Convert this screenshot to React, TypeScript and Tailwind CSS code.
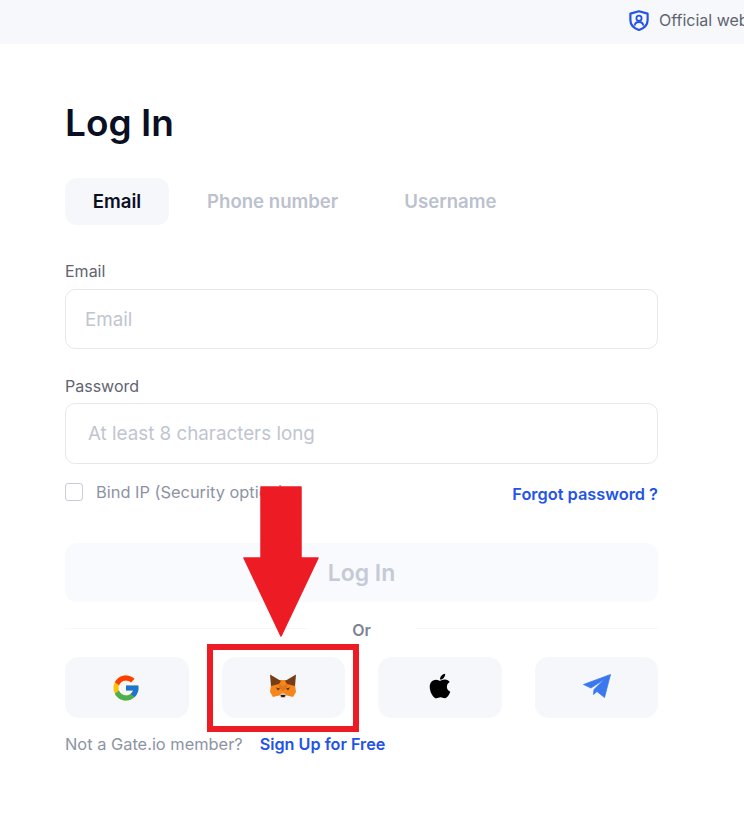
import { FcGoogle } from "react-icons/fc";
import { FaApple } from "react-icons/fa";

function Shield() {
  return (
    <svg width="20" height="21" viewBox="0 0 20 21" fill="none" className="shrink-0">
      <path d="M10 1.2 L18.6 3.6 V10.2 C18.6 14.8 15 18.2 10 20 C5 18.2 1.4 14.8 1.4 10.2 V3.6 Z" stroke="#2354e6" strokeWidth="2.2" strokeLinejoin="round" />
      <circle cx="10" cy="8.2" r="2.6" stroke="#2354e6" strokeWidth="1.8" />
      <path d="M5.6 15.6 C6 12.8 8 12 10 12 C12 12 14 12.8 14.4 15.6" stroke="#2354e6" strokeWidth="1.8" />
    </svg>
  );
}

function Fox() {
  return (
    <svg width="28" height="25" viewBox="0 0 28 25" className="mb-[2px]">
      <polygon points="2,11 10,6 18,6 26,11 27,18 24,23 18,21.5 14,21 10,21.5 4,23 1,18" fill="#f6851b" />
      <polygon points="1,0.5 12,7 10,10 2,12" fill="#763d16" />
      <polygon points="27,0.5 16,7 18,10 26,12" fill="#763d16" />
      <polygon points="10,9 14,13 18,9 18,14 14,17 10,14" fill="#e2761b" />
      <polygon points="7,13.5 11,14.5 9,16.5" fill="#5c3317" />
      <polygon points="21,13.5 17,14.5 19,16.5" fill="#5c3317" />
      <polygon points="10.5,21 14,18.5 17.5,21 16,24 12,24" fill="#d7c1b3" />
      <polygon points="11.5,21 16.5,21 15.5,23 12.5,23" fill="#2a1a10" />
    </svg>
  );
}

function Plane() {
  return (
    <svg width="28" height="24" viewBox="0 0 28 24" className="mb-[4px] ml-[2px]">
      <path d="M27.5 0.5 L0.5 10.5 L8 14 L21 5.5 L11 15.5 L10.5 20.5 L14 17.5 L21.5 23.5 Z" fill="#3b78f0" stroke="#3b78f0" strokeWidth="0.8" strokeLinejoin="round" />
    </svg>
  );
}

function Social({ children }: { children: React.ReactNode }) {
  return <button className="h-[61px] bg-[#f6f7fb] rounded-[14px] flex items-center justify-center">{children}</button>;
}

export default function App() {
  return (
    <div className="relative w-[744px] h-[821px] overflow-hidden bg-white text-[#5f6470]" style={{ fontFamily: "Inter, 'Liberation Sans', sans-serif" }}>
      <div className="h-[44px] bg-[#f7f8fc] pl-[629px] pb-[4px] flex items-center gap-[10px] whitespace-nowrap overflow-hidden">
        <Shield />
        <span className="text-[16px]">Official website</span>
      </div>

      <div className="pl-[65px] w-[658px]">
        <h1 className="mt-[54px] text-[37px] leading-[50px] font-semibold text-[#0a0f24]">Log In</h1>

        <div className="mt-[30px] flex items-center text-[18.6px] font-semibold text-[#bcc1ce]">
          <div className="w-[104px] h-[47px] rounded-[12px] bg-[#f6f7fb] text-[#0a0f24] flex items-center justify-center">Email</div>
          <div className="ml-[38px]">Phone number</div>
          <div className="ml-[66px]">Username</div>
        </div>

        <div className="mt-[36px] text-[16px] leading-[20px]">Email</div>
        <div className="mt-[8px] h-[60px] rounded-[10px] border border-[#e6e8ee] flex items-center pl-[19px] pt-[2px] text-[18.8px] text-[#c0c5d0]">Email</div>

        <div className="mt-[27px] text-[16px] leading-[20px]">Password</div>
        <div className="mt-[7px] h-[61px] rounded-[10px] border border-[#e6e8ee] flex items-center pl-[22px] pt-[2px] text-[18.8px] text-[#c0c5d0]">At least 8 characters long</div>

        <div className="mt-[16px] h-[24px] flex items-center justify-between">
          <div className="flex items-center gap-[13px] text-[16.4px] text-[#8d93a3]">
            <span className="w-[18px] h-[18px] rounded-[3px] border border-[#c9ccd4]" />
            <span>Bind IP (Security option)</span>
          </div>
          <span className="mt-[4px] text-[16.35px] font-semibold text-[#2354e6]">Forgot password ?</span>
        </div>

        <div className="mt-[39px] h-[59px] pt-[1px] rounded-[12px] bg-[#f9fafd] flex items-center justify-center text-[23px] font-semibold text-[#c5cad6]">Log In</div>

        <div className="mt-[18px] h-[20px] flex items-center">
          <div className="flex-1 h-px mb-[4px] bg-[#f6f7f9]" />
          <span className="px-[45px] text-[16px] font-semibold text-[#7d8494]">Or</span>
          <div className="flex-1 h-px mb-[4px] bg-[#f6f7f9]" />
        </div>

        <div className="mt-[17px] grid grid-cols-4 gap-[33px]">
          <Social><FcGoogle size={30} className="mr-[2px]" /></Social>
          <Social><Fox /></Social>
          <Social><FaApple size={28} color="#000" className="mb-[4px]" /></Social>
          <Social><Plane /></Social>
        </div>

        <div className="mt-[16px] flex items-center text-[16.4px] leading-[20px]">
          <span className="text-[#8d93a3]">Not a Gate.io member?</span>
          <span className="ml-[17px] text-[16.2px] font-semibold text-[#2354e6]">Sign Up for Free</span>
        </div>
      </div>

      <div className="absolute left-[207px] top-[644px] w-[152px] h-[88px] border-[6px] border-[#ed1c24]" />
      <svg className="absolute left-[243px] top-[486px]" width="76" height="151" viewBox="0 0 76 151">
        <path d="M18 1 H58 V72 H75 L38 150 L1 72 H18 Z" fill="#ed1c24" stroke="#ed1c24" strokeWidth="1.5" strokeLinejoin="round" />
      </svg>
    </div>
  );
}
